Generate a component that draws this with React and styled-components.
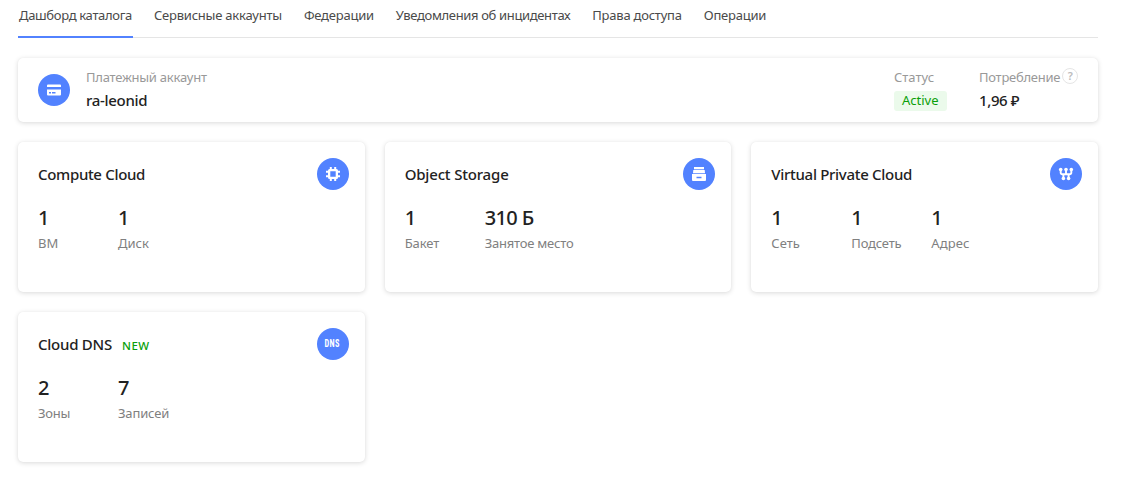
import React from 'react';
import styled, { createGlobalStyle } from 'styled-components';

const GlobalStyle = createGlobalStyle`
  * { box-sizing: border-box; }
  body {
    margin: 0;
    background: #fff;
    color: #222;
    font: 13px/18px "Noto Sans", "Open Sans", sans-serif;
  }
`;

const Page = styled.main`
  width: 1080px;
  margin-left: 18px;
  padding-bottom: 25px;
`;

const Tabs = styled.nav`
  display: flex;
  gap: 20px;
  height: 38px;
  border-bottom: 1px solid #e5e5e5;
`;

const Tab = styled.a`
  height: 38px;
  padding: 6px 1px 0;
  color: #4a4a4a;
  white-space: nowrap;
  letter-spacing: ${({ $track = 0 }) => $track}px;
  border-bottom: 2px solid ${({ $active }) => ($active ? '#5282ff' : 'transparent')};
`;

const Card = styled.section`
  background: #fff;
  border-radius: 5px;
  box-shadow: 0 0 1px rgba(0, 0, 0, 0.06), 0 1px 5px rgba(0, 0, 0, 0.15);
`;

const Billing = styled(Card)`
  display: flex;
  align-items: center;
  height: 64px;
  margin: 20px 0;
  padding: 0 20px;
`;

const Field = styled.div`
  display: flex;
  flex-direction: column;
  align-items: flex-start;
  gap: 4px;
  height: 44px;
  width: ${({ $width }) => $width || 'auto'};
  margin-left: ${({ $push }) => $push};
`;

const Caption = styled.div`
  display: flex;
  height: 19px;
  color: ${({ $dark }) => ($dark ? '#808080' : '#999')};
  white-space: nowrap;
  letter-spacing: ${({ $track = 0 }) => $track}px;
`;

const Strong = styled.div`
  font-size: 15px;
  font-weight: 500;
  line-height: ${({ $line = 20 }) => $line}px;
  white-space: nowrap;
  letter-spacing: ${({ $track = -0.3 }) => $track}px;
`;

const Status = styled.span`
  height: 20px;
  padding: 0 8px;
  line-height: 19px;
  border-radius: 3px;
  color: #0a9f0a;
  background: #ebfaeb;
`;

const Help = styled.span`
  width: 16px;
  height: 16px;
  margin: 0 0 0 2px;
  border: 1px solid #e5e5e5;
  border-radius: 50%;
  color: #bbb;
  font-size: 11px;
  font-weight: 600;
  line-height: 14px;
  text-align: center;
`;

const Badge = styled.span`
  display: grid;
  place-items: center;
  flex: none;
  width: 32px;
  height: 32px;
  border-radius: 50%;
  background: #5282ff;
  color: #fff;

  svg { display: block; }
`;

const DnsMark = styled.span`
  font: 700 11px/14px "Liberation Sans Narrow", "Roboto Condensed", Roboto, sans-serif;
  letter-spacing: 0.5px;
  transform: scaleX(0.75);
`;

const Grid = styled.div`
  display: grid;
  grid-template-columns: repeat(3, 1fr);
  grid-auto-rows: 150px;
  gap: 20px;
`;

const Service = styled(Card)`
  padding: 16px 16px 0 20px;
`;

const Header = styled.header`
  display: flex;
  align-items: center;
  height: 32px;

  ${Badge} { margin-left: auto; }
`;

const NewLabel = styled.span`
  margin: 3px 0 0 10px;
  color: #0a9f0a;
  font-size: 11.5px;
  font-weight: 500;
  letter-spacing: 0.5px;
`;

const Stats = styled.div`
  display: flex;
  padding-top: 15px;
`;

const Stat = styled.div`
  min-width: 80px;
`;

const Value = styled.div`
  height: 29px;
  font-size: 20px;
  font-weight: 550;
  line-height: 26px;
  letter-spacing: -0.6px;
`;

const CardIcon = () => (
  <svg width="16" height="16" viewBox="0 0 16 16" fill="currentColor">
    <path d="M2 2.500h12a1 1 0 0 1 1 1V5H1V3.500a1 1 0 0 1 1-1Z" />
    <path fillRule="evenodd" d="M1 7.500h14v5a1 1 0 0 1-1 1H2a1 1 0 0 1-1-1ZM3 10v1.500h2V10Zm3 0v1.500h3.500V10Z" />
  </svg>
);

const ChipIcon = () => (
  <svg width="16" height="16" viewBox="0 0 16 16" fill="currentColor">
    <path
      fillRule="evenodd"
      d="M4.800 1h2v2h2.400V1h2v2h.3a1.500 1.500 0 0 1 1.500 1.500v.3h2v2h-2v2.400h2v2h-2v.3a1.500 1.500 0 0 1-1.500 1.500h-.3v2h-2v-2H6.800v2h-2v-2h-.3A1.500 1.500 0 0 1 3 11.500v-.3H1v-2h2V6.800H1v-2h2v-.3A1.500 1.500 0 0 1 4.500 3h.3ZM5.300 5.300v5.400h5.400V5.300Z"
    />
  </svg>
);

const DrawerIcon = () => (
  <svg width="16" height="16" viewBox="0 0 16 16" fill="currentColor">
    <path d="M3 1h10v2.300H3Z" />
    <path d="M2.300 4h11.400l.3 3.200H2Z" />
    <path fillRule="evenodd" d="M1 8h14v6a1 1 0 0 1-1 1H2a1 1 0 0 1-1-1ZM5.500 10.700v1.500h5v-1.500Z" />
  </svg>
);

const NetworkIcon = () => (
  <svg width="16" height="16" viewBox="0 0 16 16" fill="currentColor">
    <path
      d="M2.700 3.500v3.200a1.500 1.500 0 0 0 1.500 1.500h7.600a1.500 1.500 0 0 0 1.500-1.500V3.500M8 3.500v4.700M5.400 8v5M10.600 8v5"
      fill="none"
      stroke="currentColor"
      strokeWidth="1.900"
    />
    <circle cx="2.700" cy="3.500" r="1.800" />
    <circle cx="8" cy="3.500" r="1.800" />
    <circle cx="13.300" cy="3.500" r="1.800" />
    <circle cx="5.400" cy="12.500" r="1.800" />
    <circle cx="10.600" cy="12.500" r="1.800" />
  </svg>
);

const tabs = [
  { label: 'Дашборд каталога', track: -0.32 },
  { label: 'Сервисные аккаунты', track: -0.23 },
  { label: 'Федерации', track: -0.22 },
  { label: 'Уведомления об инцидентах', track: -0.35 },
  { label: 'Права доступа', track: -0.23 },
  { label: 'Операции', track: -0.22 },
];

const services = [
  {
    name: 'Compute Cloud',
    icon: <ChipIcon />,
    track: -0.33,
    stats: [{ value: '1', label: 'ВМ' }, { value: '1', label: 'Диск' }],
  },
  {
    name: 'Object Storage',
    icon: <DrawerIcon />,
    track: -0.18,
    stats: [
      { value: '1', label: 'Бакет', track: -0.1 },
      { value: '310 Б', label: 'Занятое место', track: -0.22 },
    ],
  },
  {
    name: 'Virtual Private Cloud',
    icon: <NetworkIcon />,
    stats: [
      { value: '1', label: 'Сеть' },
      { value: '1', label: 'Подсеть', track: -0.2 },
      { value: '1', label: 'Адрес', track: 0.1 },
    ],
  },
  {
    name: 'Cloud DNS',
    isNew: true,
    icon: <DnsMark>DNS</DnsMark>,
    track: -0.25,
    stats: [
      { value: '2', label: 'Зоны', track: -0.2 },
      { value: '7', label: 'Записей', track: -0.15 },
    ],
  },
];

export default function App() {
  return (
    <Page>
      <GlobalStyle />
      <Tabs>
        {tabs.map((tab, i) => (
          <Tab key={tab.label} $active={i === 0} $track={tab.track}>{tab.label}</Tab>
        ))}
      </Tabs>
      <Billing>
        <Badge><CardIcon /></Badge>
        <Field $push="16px">
          <Caption $track={-0.24}>Платежный аккаунт</Caption>
          <Strong $line={18}>ra-leonid</Strong>
        </Field>
        <Field $push="auto" $width="85px">
          <Caption>Статус</Caption>
          <Status>Active</Status>
        </Field>
        <Field $push="0" $width="99px">
          <Caption $track={-0.26}>Потребление<Help>?</Help></Caption>
          <Strong $line={18} $track={-0.4}>1,96 ₽</Strong>
        </Field>
      </Billing>
      <Grid>
        {services.map((service) => (
          <Service key={service.name}>
            <Header>
              <Strong $track={service.track}>{service.name}</Strong>
              {service.isNew && <NewLabel>NEW</NewLabel>}
              <Badge>{service.icon}</Badge>
            </Header>
            <Stats>
              {service.stats.map((stat) => (
                <Stat key={stat.label}>
                  <Value>{stat.value}</Value>
                  <Caption $dark $track={stat.track}>{stat.label}</Caption>
                </Stat>
              ))}
            </Stats>
          </Service>
        ))}
      </Grid>
    </Page>
  );
}
